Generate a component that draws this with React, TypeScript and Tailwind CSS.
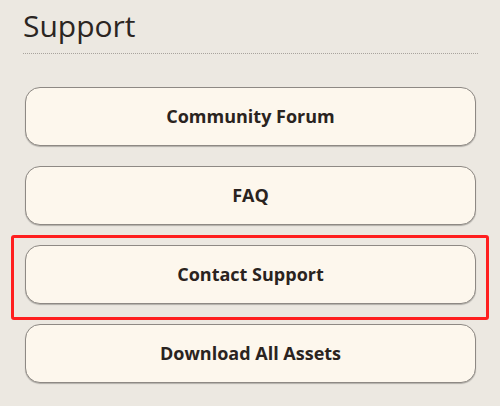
import React from "react";

const items = ["Community Forum", "FAQ", "Contact Support", "Download All Assets"];

export default function App() {
  return (
    <div
      className="relative w-[500px] h-[406px] bg-[#ece8e1] overflow-hidden"
      style={{ fontFamily: '"Open Sans", "Noto Sans", sans-serif' }}
    >
      <div className="pl-[23px] pr-[22px] pt-2">
        <h2 className="text-[30px] leading-[36px] font-normal text-[#2b2522] pb-[9px] border-b border-dotted border-[#a8a39d]">
          Support
        </h2>
        <div className="mt-[33px] ml-[2px] mr-[2px] flex flex-col gap-[20px]">
          {items.map((t) => (
            <button
              key={t}
              className="h-[59px] w-full rounded-[15px] border-[1.5px] border-[#8e8984] bg-[#fdf7ed] shadow-[0_1px_1px_rgba(0,0,0,0.25)] text-[18px] font-bold text-[#2a2320] flex items-center justify-center"
            >
              {t}
            </button>
          ))}
        </div>
      </div>
      <div className="absolute left-[11px] top-[235px] w-[478px] h-[85px] border-[3px] border-[#ff1f1f] rounded-[3px] pointer-events-none" />
    </div>
  );
}
